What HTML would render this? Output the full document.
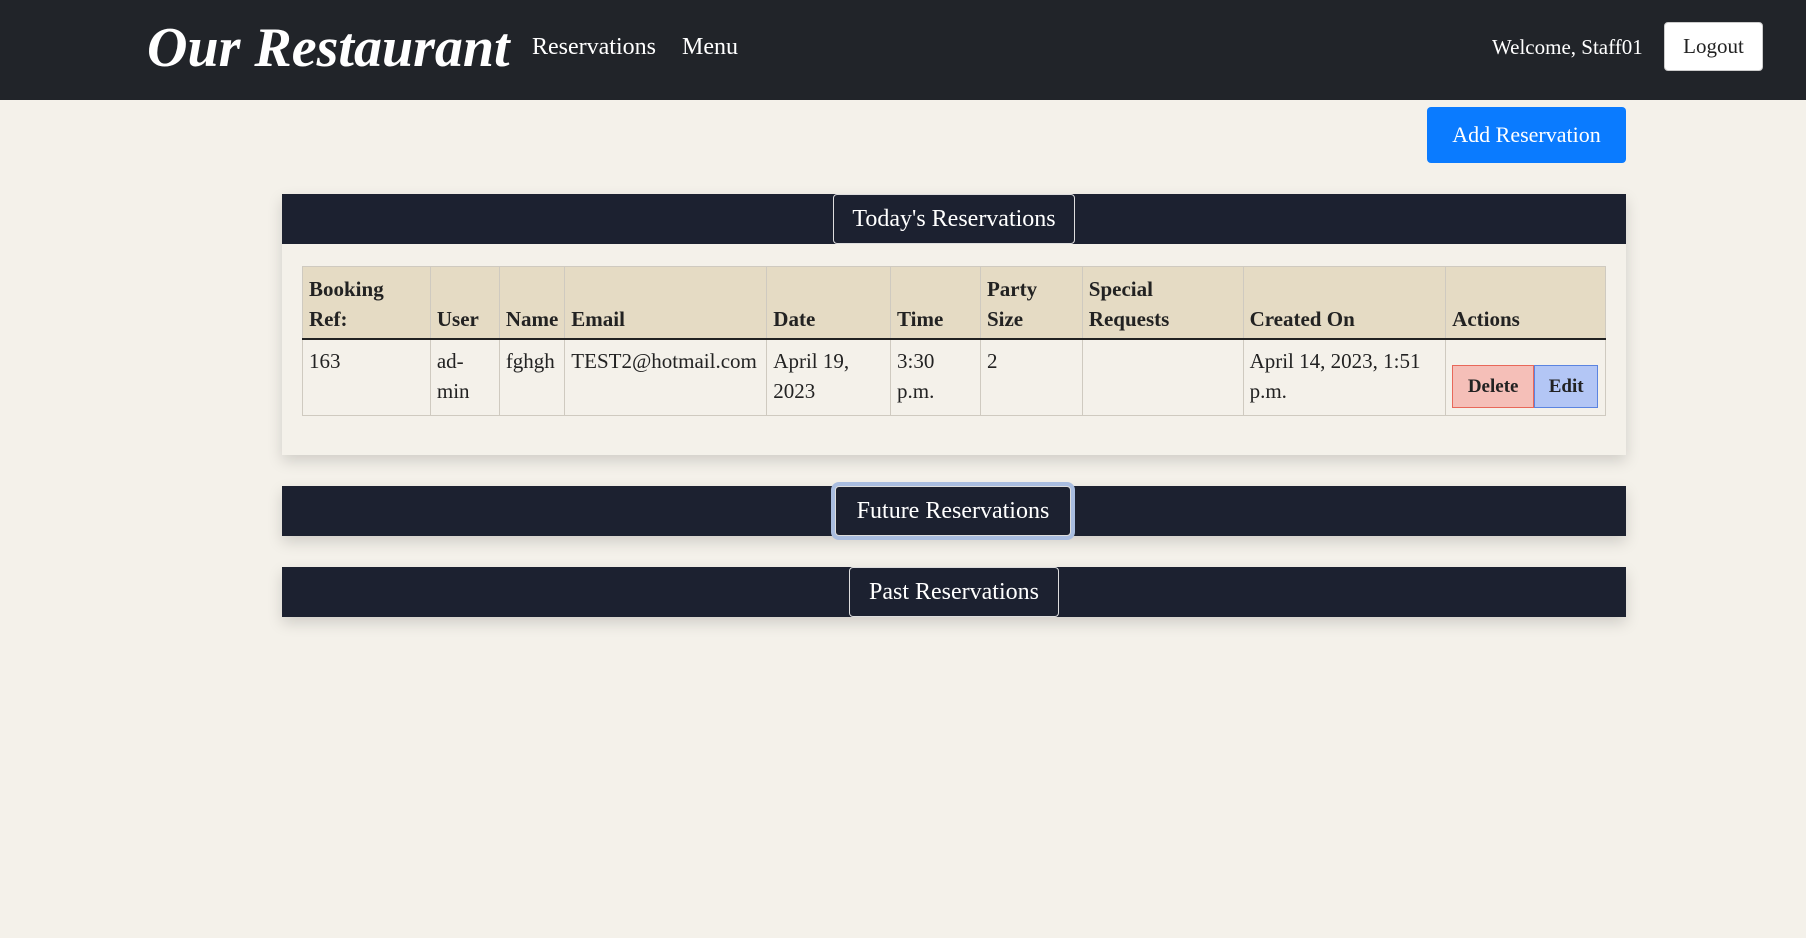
<!DOCTYPE html>
<html><head><meta charset="utf-8"><style>
*{box-sizing:border-box;margin:0;padding:0}
body{width:1806px;height:938px;background:#f4f1ea;font-family:"Liberation Serif",serif;color:#222;position:relative;overflow:hidden}
.nav{position:absolute;left:0;top:0;width:1806px;height:100px;background:#212429}
.logo{position:absolute;left:147px;top:16px;font-size:56px;font-weight:bold;font-style:italic;color:#fff;letter-spacing:0px}
.nl{position:absolute;top:34px;font-size:24px;color:#fff}
.logout{position:absolute;left:1664px;top:22px;width:99px;height:49px;background:#fff;border:1px solid #ccc;border-radius:4px;font-size:21px;text-align:center;line-height:47px;color:#222}
.add{position:absolute;left:1427px;top:107px;width:199px;height:56px;background:#0a7bff;border-radius:4px;color:#fff;font-size:22px;text-align:center;line-height:56px}
.card{position:absolute;left:282px;width:1344px;box-shadow:0 6px 14px rgba(0,0,0,.15);background:#f4f1ea}
.hd{height:50px;background:#1c2130;position:relative}
.tb{position:absolute;top:0;height:50px;border:1px solid #ddd;border-radius:4px;color:#fff;font-size:24px;text-align:center;line-height:48px;background:#1c2130}
table{position:absolute;left:20px;top:72px;border-collapse:collapse;font-size:21px;width:1304px}
th,td{border:1px solid #cfcac0;text-align:left;vertical-align:bottom;padding:4px 6px;line-height:30px}
th{background:#e5dbc4;font-weight:bold;height:72px}
thead tr{border-bottom:2px solid #222}
td{vertical-align:top;height:77px;padding-top:6px}
.btn{display:inline-block;height:43px;line-height:41px;font-weight:bold;font-size:19px;text-align:center}
</style></head><body>
<div class="nav">
<div class="logo">Our Restaurant</div>
<div class="nl" style="left:532px">Reservations</div>
<div class="nl" style="left:682px">Menu</div>
<div class="nl" style="left:1492px;font-size:21px;top:35px">Welcome, Staff01</div>
<div class="logout">Logout</div>
</div>
<div class="add">Add Reservation</div>
<div class="card" style="top:194px;height:261px">
<div class="hd"><div class="tb" style="left:551px;width:242px">Today's Reservations</div></div>
<table style="top:72px">
<colgroup><col style="width:128px"><col style="width:69px"><col style="width:65px"><col style="width:202px"><col style="width:124px"><col style="width:90px"><col style="width:102px"><col style="width:161px"><col style="width:203px"><col style="width:160px"></colgroup>
<thead><tr><th>Booking<br>Ref:</th><th>User</th><th>Name</th><th>Email</th><th>Date</th><th>Time</th><th>Party<br>Size</th><th>Special<br>Requests</th><th>Created On</th><th>Actions</th></tr></thead>
<tbody><tr><td>163</td><td>ad-<br>min</td><td>fghgh</td><td>TEST2@hotmail.com</td><td>April 19,<br>2023</td><td>3:30<br>p.m.</td><td>2</td><td></td><td>April 14, 2023, 1:51<br>p.m.</td><td style="vertical-align:middle;padding-top:22px"><span class="btn" style="width:82px;background:#f5bfb8;border:1px solid #e8685a">Delete</span><span class="btn" style="width:64px;background:#b3c6f5;border:1px solid #5b84e0">Edit</span></td></tr></tbody>
</table>
</div>
<div class="card" style="top:486px;height:50px"><div class="hd"><div class="tb" style="left:553px;width:236px;box-shadow:0 0 0 4px #a9bde0">Future Reservations</div></div></div>
<div class="card" style="top:567px;height:50px"><div class="hd"><div class="tb" style="left:567px;width:210px">Past Reservations</div></div></div>
</body></html>
